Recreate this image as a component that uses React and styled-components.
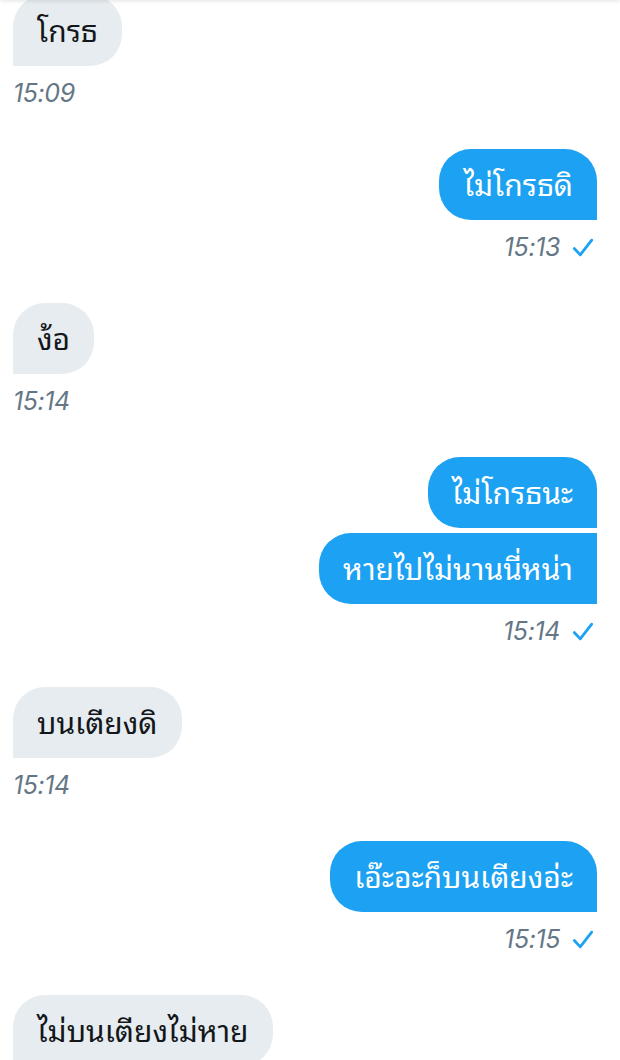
import styled, { createGlobalStyle } from "styled-components";

const GlobalStyle = createGlobalStyle`
  body {
    margin: 0;
    background: #ffffff;
    font-family: "Noto Sans", "Noto Sans Thai Looped", "Noto Looped Thai", "Loma", "Garuda", "Noto Sans Thai", "Roboto", sans-serif;
  }
`;

const conversation = [
  { from: "them", texts: ["โกรธ"], time: "15:09" },
  { from: "me", texts: ["ไม่โกรธดิ"], time: "15:13" },
  { from: "them", texts: ["ง้อ"], time: "15:14" },
  { from: "me", texts: ["ไม่โกรธนะ", "หายไปไม่นานนี่หน่า"], time: "15:14" },
  { from: "them", texts: ["บนเตียงดิ"], time: "15:14" },
  { from: "me", texts: ["เอ๊ะอะก็บนเตียงอ่ะ"], time: "15:15" },
  { from: "them", texts: ["ไม่บนเตียงไม่หาย"] },
];

function Check() {
  return (
    <CheckIcon viewBox="0 0 24 24">
      <path d="M2.5 12.5 L9 19.5 L21.5 3.5" />
    </CheckIcon>
  );
}

export default function App() {
  return (
    <Screen>
      <GlobalStyle />
      <HeaderShadow />
      <List>
        {conversation.map((entry, i) => {
          const mine = entry.from === "me";
          return (
            <Entry key={i} $mine={mine}>
              <Stack $mine={mine}>
                {entry.texts.map((t, j) => (
                  <Bubble key={j} $mine={mine} $follow={j > 0}>
                    {t}
                  </Bubble>
                ))}
              </Stack>
              {entry.time && (
                <Meta $mine={mine}>
                  <Time>{entry.time}</Time>
                  {mine && <Check />}
                </Meta>
              )}
            </Entry>
          );
        })}
      </List>
    </Screen>
  );
}

const Screen = styled.div`
  width: 620px;
  height: 1060px;
  overflow: hidden;
  position: relative;
  background: #ffffff;
`;

const HeaderShadow = styled.div`
  position: absolute;
  top: -4px;
  left: 0;
  right: 0;
  height: 4px;
  box-shadow: 0 1px 4px rgba(0, 0, 0, 0.12);
  z-index: 2;
`;

const List = styled.div`
  display: flex;
  flex-direction: column;
  gap: 41px;
  padding: 0 23px 0 13px;
  margin-top: -5px;
`;

const Entry = styled.div`
  display: flex;
  flex-direction: column;
  align-items: ${(p) => (p.$mine ? "flex-end" : "flex-start")};
`;

const Stack = styled.div`
  display: flex;
  flex-direction: column;
  align-items: ${(p) => (p.$mine ? "flex-end" : "flex-start")};
  gap: 5px;
`;

const Bubble = styled.div`
  padding: 15px 24px;
  height: 41px;
  font-size: 30px;
  line-height: 41px;
  white-space: nowrap;
  color: ${(p) => (p.$mine ? "#ffffff" : "#14171a")};
  background: ${(p) => (p.$mine ? "#1da1f2" : "#e6ecf0")};
  border-radius: ${(p) =>
    p.$mine
      ? p.$follow
        ? "32px 0 0 32px"
        : "32px 32px 0 32px"
      : "32px 32px 32px 0"};
`;

const Meta = styled.div`
  display: flex;
  align-items: center;
  gap: 12px;
  margin-top: 12px;
  height: 30px;
  padding-right: ${(p) => (p.$mine ? "3px" : "0")};
`;

const Time = styled.span`
  font-family: "Inter", "Roboto", sans-serif;
  font-style: italic;
  font-size: 25px;
  font-weight: 400;
  letter-spacing: -0.4px;
  color: #657786;
`;

const CheckIcon = styled.svg`
  width: 22px;
  height: 22px;
  fill: none;
  stroke: #1da1f2;
  stroke-width: 3;
  stroke-linecap: round;
  stroke-linejoin: round;
  margin-top: 2px;
`;
